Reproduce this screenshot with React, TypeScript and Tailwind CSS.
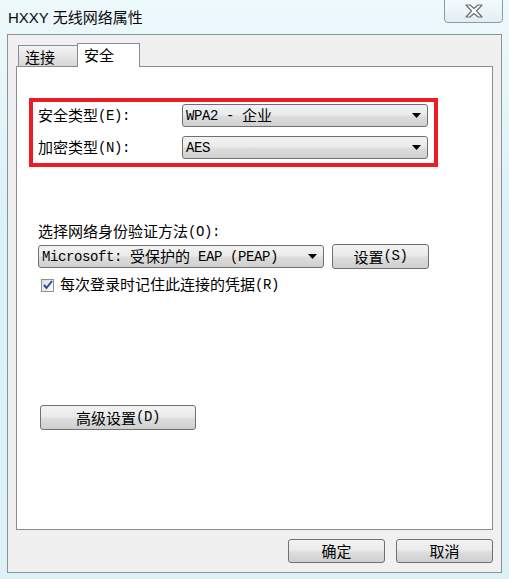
import type { ReactNode } from "react"

const cjk = "font-['Noto_Sans_CJK_SC',sans-serif]"
const btnBg =
  "bg-[linear-gradient(#f2f2f2,#ebebeb_45%,#dddddd_55%,#cfcfcf)] border border-[#707070] rounded-[3px]"

function L({ children }: { children: ReactNode }) {
  return (
    <span className="relative top-[-1px] font-['Liberation_Mono',monospace] text-[14px] tracking-[-0.4px]">
      {children}
    </span>
  )
}

function Arrow() {
  return (
    <svg width="9" height="5" viewBox="0 0 9 5" className="shrink-0">
      <path d="M0 0h9L4.5 5z" fill="#000" />
    </svg>
  )
}

function Combo({ children, className }: { children: ReactNode; className: string }) {
  return (
    <div className={`${btnBg} flex h-[23px] items-center justify-between pl-[3px] pr-[6px] ${className}`}>
      <span className="whitespace-pre leading-[16px]">{children}</span>
      <Arrow />
    </div>
  )
}

function Btn({ children, className }: { children: ReactNode; className: string }) {
  return (
    <button className={`${btnBg} flex items-center justify-center leading-[16px] ${className}`}>
      {children}
    </button>
  )
}

export default function App() {
  return (
    <div className={`h-[579px] w-[509px] overflow-hidden bg-[linear-gradient(180deg,#eef9fc,#d9f1f7_40%,#dcf2f7)] text-[15px] text-black ${cjk}`}>
      {/* Title bar */}
      <div className="flex h-[34px] items-start justify-between">
        <div className="pl-[8px] pt-[9px] font-['Liberation_Sans','Noto_Sans_CJK_SC',sans-serif] text-[15px] leading-[18px] text-[#0a0a0a]">
          HXXY 无线网络属性
        </div>
        <div className="mr-[6px] -mt-px flex h-[24px] w-[59px] items-center justify-center rounded-b-[4px] border border-[#8e9aa3] bg-[linear-gradient(#f4fafc,#e3eef2)]">
          <svg width="20" height="14" viewBox="0 0 20 14">
            <path
              d="M2 1h4l4 3.5L14 1h4l-5.5 6L18 13h-4l-4-3.5L6 13H2l5.5-6z"
              fill="#fff"
              stroke="#6b6f73"
              strokeWidth="1.2"
              strokeLinejoin="round"
            />
          </svg>
        </div>
      </div>

      {/* Client area */}
      <div className="mx-[7px] h-[539px] border border-[#8f9396] bg-[#f0f0f0] pl-[8px] pt-[8px]">
        {/* Tabs */}
        <div className="flex h-[23px] items-end pl-[2px]">
          <div className="flex h-[21px] w-[59px] items-center border-l border-t border-[#898c95] bg-[linear-gradient(#f3f3f3,#e6e6e6_50%,#d6d6d6)] pl-[6px] pt-[2px] leading-[16px]">
            连接
          </div>
          <div className="relative z-10 -mb-px flex h-[24px] w-[63px] items-start border-l border-r border-t border-[#898c95] bg-white pl-[6px] pt-[2px] leading-[18px]">
            安全
          </div>
        </div>

        {/* Panel */}
        <div className="h-[464px] w-[477px] border border-[#898c95] bg-white pt-[31px]">
          <div className="ml-[12px] h-[69px] w-[409px] border-4 border-[#ed1c24] pl-[5px] pr-[5px] pt-[2px]">
            <div className="flex items-center">
              <div className="w-[144px] leading-[16px]">
                安全类型<L>(E):</L>
              </div>
              <Combo className="w-[246px]">
                <L>WPA2 - </L>企业
              </Combo>
            </div>
            <div className="mt-[9px] flex items-center">
              <div className="w-[144px] leading-[16px]">
                加密类型<L>(N):</L>
              </div>
              <Combo className="w-[246px]">
                <L>AES</L>
              </Combo>
            </div>
          </div>

          <div className="pl-[21px]">
            <div className="mt-[56px] leading-[16px]">
              选择网络身份验证方法<L>(O):</L>
            </div>
            <div className="mt-[3px] flex items-center gap-[8px]">
              <Combo className="w-[286px]">
                <L>Microsoft: </L>受保护的<L> EAP (PEAP)</L>
              </Combo>
              <Btn className="h-[25px] w-[97px]">
                设置<L>(S)</L>
              </Btn>
            </div>
            <div className="mt-[7px] flex items-center gap-[6px] pl-[3px]">
              <div className="flex h-[13px] w-[13px] items-center justify-center border border-[#8e8f8f] bg-[linear-gradient(135deg,#dcdcdc,#ffffff)]">
                <svg width="10" height="10" viewBox="0 0 10 10">
                  <path d="M1 5l2.5 3L9 1" fill="none" stroke="#2b4c9b" strokeWidth="2" />
                </svg>
              </div>
              <span className="leading-[16px]">
                每次登录时记住此连接的凭据<L>(R)</L>
              </span>
            </div>
            <Btn className="ml-[2px] mt-[111px] h-[25px] w-[156px]">
              高级设置<L>(D)</L>
            </Btn>
          </div>
        </div>

        {/* Footer buttons */}
        <div className="mt-[9px] flex w-[477px] justify-end gap-[11px]">
          <Btn className="h-[24px] w-[97px]">确定</Btn>
          <Btn className="h-[24px] w-[97px]">取消</Btn>
        </div>
      </div>
    </div>
  )
}
